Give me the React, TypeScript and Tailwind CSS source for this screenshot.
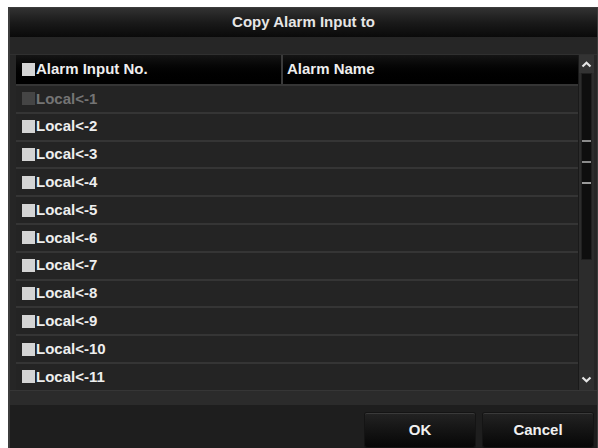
const rows = Array.from({ length: 11 }, (_, i) => `Local<-${i + 1}`);

const font = { fontFamily: '"Liberation Sans", Arial, sans-serif' };

const Checkbox = ({ disabled }: { disabled?: boolean }) => (
  <span className={`w-[13px] h-[13px] shrink-0 ${disabled ? "bg-[#454545]" : "bg-[#d4d4d4]"}`} />
);

const DialogButton = ({ label }: { label: string }) => (
  <button className="w-[110px] h-[34px] rounded-[2px] border-t border-[#3a3a3a] bg-gradient-to-b from-[#222] to-[#070707] text-[15px] font-bold text-[#f0f0f0] shadow-[0_0_0_1px_#141414]">
    {label}
  </button>
);

const ScrollBar = () => (
  <div className="w-[16px] flex flex-col bg-[#2c2c2c] border-l border-[#1a1a1a]">
    <div className="h-[18px] flex items-center justify-center bg-[#333]">
      <svg width="11" height="7" viewBox="0 0 11 7">
        <path d="M1.5 5.5 L5.5 1.8 L9.5 5.5" stroke="#e6e6e6" strokeWidth="2.2" fill="none" />
      </svg>
    </div>
    <div className="h-[187px] mx-[2px] bg-[#0e0e0e] border border-[#202020] flex flex-col items-center justify-center gap-[19px] pb-[10px]">
      <span className="w-[9px] h-[2px] bg-[#8a8a8a]" />
      <span className="w-[9px] h-[2px] bg-[#8a8a8a]" />
      <span className="w-[9px] h-[2px] bg-[#9a9a9a]" />
    </div>
    <div className="flex-1" />
    <div className="h-[20px] flex items-center justify-center bg-[#2f2f2f]">
      <svg width="11" height="7" viewBox="0 0 11 7">
        <path d="M1.5 1.5 L5.5 5.2 L9.5 1.5" stroke="#e6e6e6" strokeWidth="2.2" fill="none" />
      </svg>
    </div>
  </div>
);

export default function App() {
  return (
    <div className="w-[598px] h-[448px] bg-white pl-[8px] pt-[7px] overflow-hidden" style={font}>
      <div className="w-[590px] h-[441px] flex flex-col bg-[#1f1f1f] border-l-2 border-t border-r border-[#3c3c3c]">
        <div className="h-[29px] shrink-0 flex items-center justify-center bg-gradient-to-b from-[#323232] via-[#1a1a1a] to-[#0a0a0a] text-[15px] font-bold text-[#e6e6e6]">
          Copy Alarm Input to
        </div>
        <div className="h-[18px] shrink-0 bg-[#262626] border-b border-[#303030]" />
        <div className="flex bg-[#262626] pl-[6px] pr-[3px]">
          <div className="flex-1 flex flex-col">
            <div className="h-[29px] flex bg-gradient-to-b from-[#151515] to-[#000] text-[15px] font-bold text-[#eeeeee]">
              <div className="w-[267px] flex items-center pl-[6px] gap-[1px] border-r-2 border-[#3a3a3a]">
                <Checkbox />
                <span>Alarm Input No.</span>
              </div>
              <div className="flex-1 flex items-center pl-[4px]">Alarm Name</div>
            </div>
            {rows.map((r, i) => (
              <div
                key={r}
                className={`h-[27.8px] flex items-center pl-[6px] gap-[1px] bg-[#242424] border-t-2 border-[#353535] text-[15px] font-bold ${
                  i === 0 ? "text-[#747474]" : "text-[#eeeeee]"
                }`}
              >
                <Checkbox disabled={i === 0} />
                <span>{r}</span>
              </div>
            ))}
          </div>
          <ScrollBar />
        </div>
        <div className="h-[15px] shrink-0 bg-[#2b2b2b] border-t border-[#363636]" />
        <div className="flex-1 flex justify-end items-start gap-[8px] pt-[8px] pr-[4px] bg-[#1e1e1e]">
          <DialogButton label="OK" />
          <DialogButton label="Cancel" />
        </div>
      </div>
    </div>
  );
}
